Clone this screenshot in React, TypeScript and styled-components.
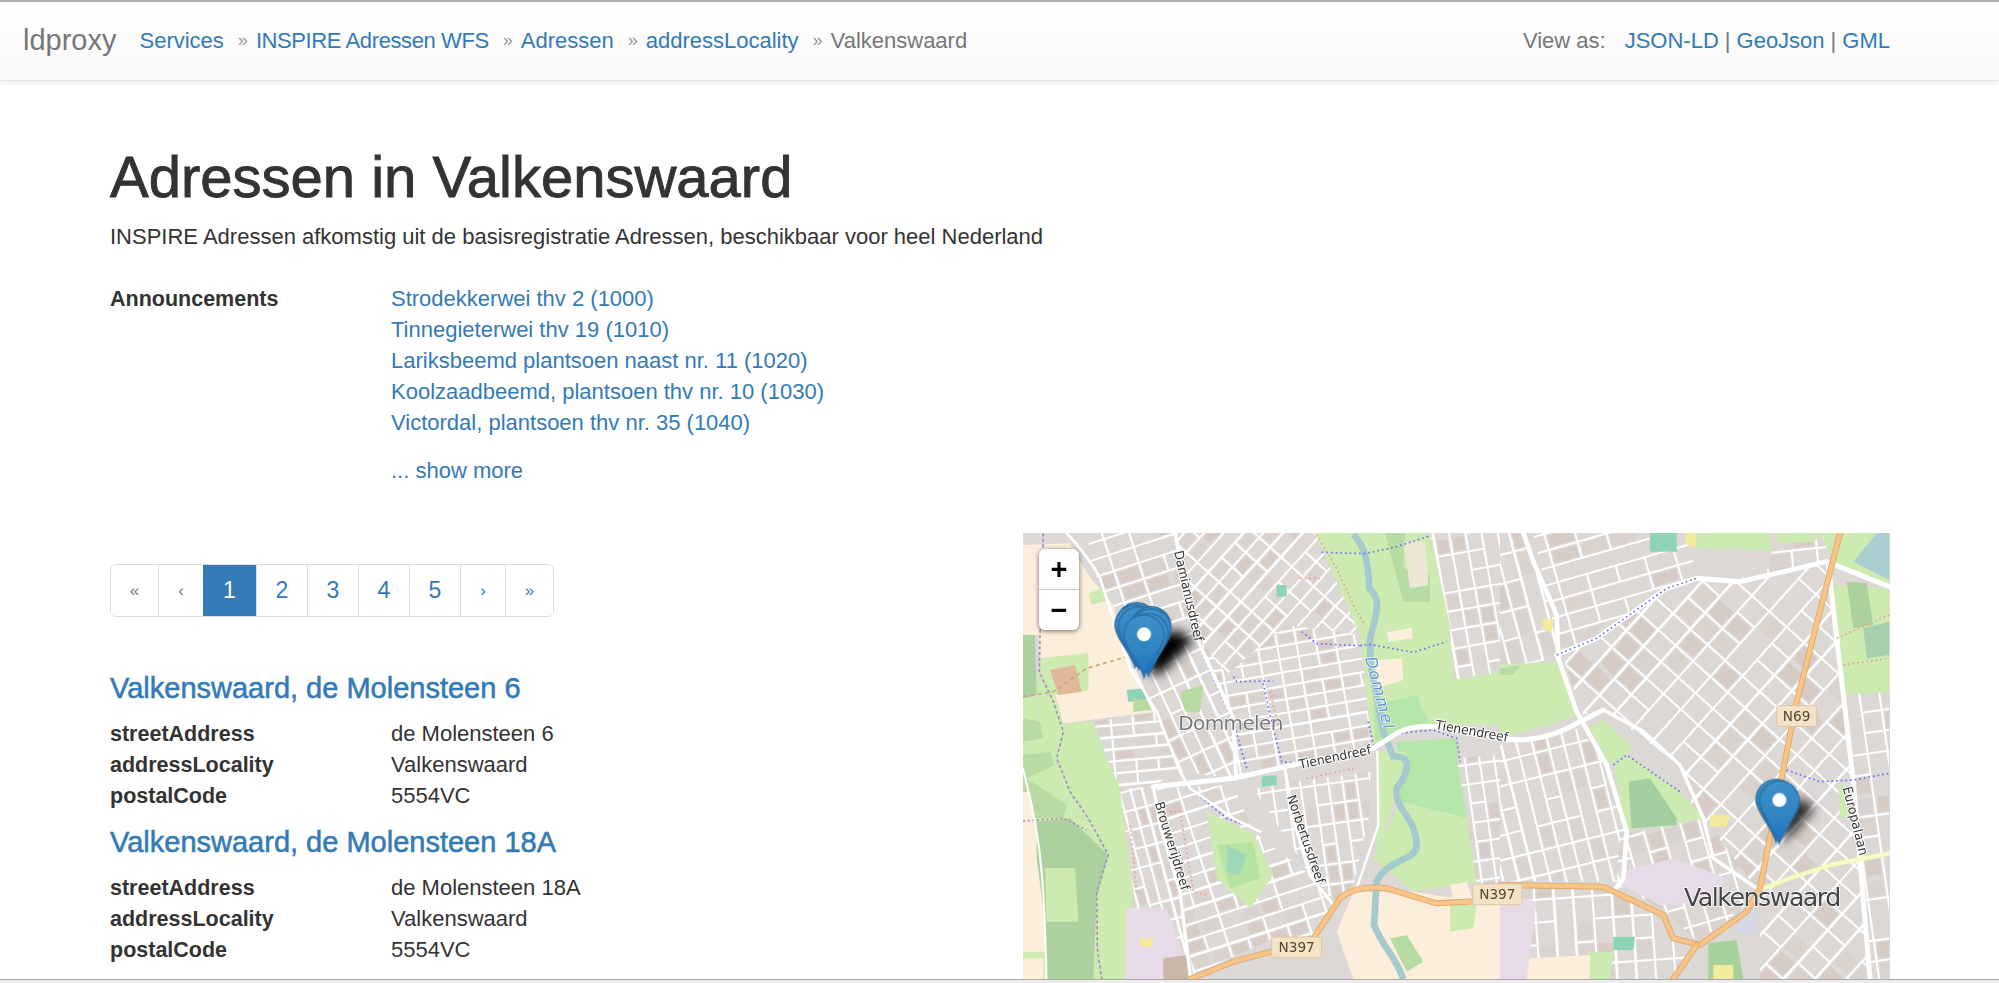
import React from "react";
import styled, { createGlobalStyle } from "styled-components";

const GlobalStyle = createGlobalStyle`
  html, body { margin: 0; padding: 0; height: 100%; overflow: hidden; background: #fff; }
  body { font-family: "Liberation Sans", Arial, sans-serif; font-size: 22px; color: #333; }
  * { box-sizing: border-box; }
  a { color: #337ab7; text-decoration: none; }
`;

const Page = styled.div`
  height: 983px;
  display: flex;
  flex-direction: column;
  overflow: hidden;
`;

const Navbar = styled.nav`
  height: 81px;
  flex: none;
  display: flex;
  align-items: center;
  padding: 0 109px 1px 23px;
  border-top: 2px solid #aeaeae;
  border-bottom: 1px solid #e6e6e6;
  background: linear-gradient(to bottom, #fff 0%, #f8f8f8 100%);
  box-shadow: 0 2px 5px rgba(0, 0, 0, 0.07);
  color: #777;
`;

const Brand = styled.div`
  font-size: 29px;
  margin-right: 23px;
`;

const Crumb = styled.a<{ $tight?: boolean }>`
  font-size: 22px;
  letter-spacing: ${(p) => (p.$tight ? "-0.4px" : "0")};
`;

const CrumbSep = styled.span`
  font-size: 18px;
  margin: 0 8px 0 14px;
  color: #999;
`;

const CurrentCrumb = styled.span`
  font-size: 22px;
  color: #777;
`;

const ViewAs = styled.div`
  margin-left: auto;
  font-size: 22px;
  display: flex;
  align-items: center;
`;

const ViewLabel = styled.span`
  margin-right: 19px;
`;

const Pipe = styled.span`
  margin: 0 6px;
`;

const Main = styled.main`
  flex: 1;
  min-height: 0;
  padding: 0 109px 0 110px;
  overflow: hidden;
`;

const Title = styled.h1`
  margin: 61px 0 0;
  font-size: 58px;
  line-height: 69px;
  font-weight: 400;
  -webkit-text-stroke: 0.9px #333;
  color: #333;
`;

const Subtitle = styled.p`
  margin: 10px 0 0;
  font-size: 22px;
  line-height: 31px;
  color: #333;
`;

const DefRow = styled.div`
  display: grid;
  grid-template-columns: 281px 1fr;
  align-items: baseline;
  font-size: 22px;
  line-height: 31px;
`;

const Announcements = styled(DefRow)`
  margin-top: 31px;
`;

const PropRow = styled(DefRow)`
  height: 31px;
`;

const Term = styled.div`
  font-weight: 700;
  font-size: 21.5px;
`;

const LinkList = styled.div`
  display: flex;
  flex-direction: column;
`;

const ShowMore = styled.a`
  display: block;
  margin-top: 17px;
`;

const Columns = styled.div`
  display: flex;
  justify-content: space-between;
  margin-top: 47px;
`;

const LeftColumn = styled.div`
  width: 700px;
  padding-top: 31px;
`;

const Pager = styled.ul`
  list-style: none;
  display: inline-flex;
  margin: 0;
  padding: 0;
  height: 53px;
  border: 1px solid #ddd;
  border-radius: 6px;
  overflow: hidden;
`;

const PageCell = styled.li<{ $w: number; $active?: boolean; $small?: boolean; $muted?: boolean }>`
  width: ${(p) => p.$w}px;
  display: flex;
  align-items: center;
  justify-content: center;
  font-size: ${(p) => (p.$small ? 17 : 23)}px;
  color: ${(p) => (p.$active ? "#fff" : p.$muted ? "#777" : "#337ab7")};
  background: ${(p) => (p.$active ? "#337ab7" : "#fff")};
  border-left: ${(p) => (p.$active ? "none" : "1px solid #ddd")};
  &:first-child {
    border-left: none;
  }
`;

const ItemTitle = styled.a`
  display: block;
  font-size: 29px;
  line-height: 40px;
  font-weight: 400;
  -webkit-text-stroke: 0.55px #337ab7;
`;

const FirstItem = styled.div`
  margin-top: 51px;
`;

const Item = styled.div`
  margin-top: 11px;
`;

const Props = styled.div`
  margin-top: 10px;
`;

const MapFrame = styled.div`
  position: relative;
  width: 867px;
  height: 447px;
  overflow: hidden;
  background: #dcd8d6;
  flex: none;
`;

const MapSvg = styled.svg`
  display: block;
  width: 867px;
  height: 447px;
`;

const ZoomBox = styled.div`
  position: absolute;
  left: 16px;
  top: 16px;
  width: 40px;
  height: 81px;
  background: #fff;
  border-radius: 6px;
  box-shadow: 0 1px 5px rgba(0, 0, 0, 0.55);
  display: flex;
  flex-direction: column;
`;

const ZoomBtn = styled.div`
  flex: 1;
  display: flex;
  align-items: center;
  justify-content: center;
  font: 700 29px/1 "Liberation Sans", sans-serif;
  color: #000;
  & + & {
    border-top: 1px solid #ccc;
  }
`;

const BottomEdge = styled.div`
  flex: none;
  height: 4px;
  background: #ececec;
  border-top: 1px solid #a9a9a9;
`;

// map data is in 3x coordinates of the map crop (viewBox 9 24 2601 1341)
const RIGHT = 1440;

type Zone = { pts: number[][]; angle: number; dx: number; dy: number };

const shift = (pts: number[][]) => pts.map(([x, y]) => [x + RIGHT, y]);

const zones: Zone[] = [
  { pts: [[200, 24], [470, 24], [535, 340], [340, 440], [280, 240], [220, 140]], angle: 72, dx: 50, dy: 78 },
  { pts: [[470, 24], [885, 24], [1020, 330], [800, 300], [620, 450], [535, 340]], angle: 42, dx: 44, dy: 60 },
  { pts: [[535, 340], [620, 450], [800, 300], [1020, 330], [1050, 620], [1060, 670], [840, 715], [645, 755], [640, 580]], angle: 80, dx: 40, dy: 58 },
  { pts: [[340, 440], [535, 340], [640, 580], [640, 760], [480, 740]], angle: -25, dx: 42, dy: 70 },
  { pts: [[220, 590], [410, 560], [480, 740], [400, 780], [300, 790], [270, 720]], angle: 85, dx: 36, dy: 66 },
  { pts: [[300, 790], [400, 785], [480, 1100], [510, 1362], [320, 1362], [340, 1100]], angle: -15, dx: 34, dy: 58 },
  { pts: [[700, 790], [1050, 740], [1050, 860], [1000, 1080], [940, 1130], [870, 1050]], angle: -8, dx: 42, dy: 60 },
  { pts: [[410, 790], [640, 780], [700, 920], [870, 1050], [950, 1130], [880, 1240], [760, 1240], [520, 1350], [480, 1100]], angle: 72, dx: 46, dy: 62 },
  { pts: [[1230, 24], [1440, 24], [1440, 440], [1300, 465], [1290, 300]], angle: -10, dx: 48, dy: 56 },
  { pts: [[1310, 700], [1440, 690], [1440, 1100], [1370, 1070], [1340, 880]], angle: -8, dx: 44, dy: 58 },
  { pts: shift([[0, 24], [70, 24], [170, 270], [175, 400], [0, 430]]), angle: -15, dx: 50, dy: 84 },
  { pts: shift([[100, 24], [580, 24], [580, 160], [290, 340], [180, 390]]), angle: 74, dx: 50, dy: 90 },
  { pts: shift([[580, 24], [980, 24], [980, 110], [720, 170], [590, 160]]), angle: 84, dx: 130, dy: 76 },
  { pts: shift([[190, 400], [500, 190], [590, 160], [720, 170], [980, 110], [1030, 510], [1060, 770], [1110, 1362], [780, 1362], [780, 1100], [620, 990], [540, 720], [310, 555], [250, 570]]), angle: 42, dx: 70, dy: 66 },
  { pts: shift([[0, 660], [240, 610], [320, 720], [380, 920], [370, 1070], [0, 1070]]), angle: -14, dx: 46, dy: 72 },
  { pts: shift([[0, 1090], [340, 1090], [500, 1170], [520, 1240], [590, 1270], [520, 1362], [0, 1362]]), angle: -4, dx: 58, dy: 68 },
  { pts: shift([[360, 930], [610, 880], [770, 1090], [720, 1160], [590, 1250], [500, 1160], [350, 1080]]), angle: -16, dx: 56, dy: 62 },
  { pts: shift([[1030, 510], [1168, 500], [1168, 1362], [1110, 1362]]), angle: -8, dx: 60, dy: 62 },
];

function rng(seed: number) {
  let s = seed;
  return () => {
    s = (s * 16807) % 2147483647;
    return (s - 1) / 2147483646;
  };
}

function zoneStreets(z: Zone, idx: number) {
  const r = rng(idx * 9973 + 131);
  const xs = z.pts.map((p) => p[0]);
  const ys = z.pts.map((p) => p[1]);
  const cx = (Math.min(...xs) + Math.max(...xs)) / 2;
  const cy = (Math.min(...ys) + Math.max(...ys)) / 2;
  const span = Math.max(Math.max(...xs) - Math.min(...xs), Math.max(...ys) - Math.min(...ys));
  const out: React.ReactNode[] = [];
  // tan building patches sit under the streets
  for (let u = -span; u <= span; u += z.dx) {
    for (let v = -span; v <= span; v += z.dy) {
      if (r() > 0.6) {
        out.push(
          <rect
            key={`b${u}-${v}`}
            x={u + 8}
            y={v + 8}
            width={z.dx - 16}
            height={z.dy - 16}
            fill={r() > 0.5 ? "#d6ccc5" : "#d9d2cd"}
            stroke="none"
          />
        );
      }
    }
  }
  for (let u = -span; u <= span; u += z.dx) {
    out.push(
      <line key={`u${u}`} x1={u} x2={u} y1={-span} y2={span} strokeWidth={r() > 0.8 ? 8 : 6} />
    );
  }
  for (let v = -span; v <= span; v += z.dy) {
    const a = Math.round(z.dx * (1 + Math.floor(r() * 3)));
    const b = Math.round(z.dx * (1 + Math.floor(r() * 2)));
    out.push(
      <line key={`v${v}`} x1={-span} x2={span} y1={v} y2={v} strokeWidth={6} strokeDasharray={r() > 0.4 ? `${a} ${b}` : undefined} />
    );
  }
  return (
    <g transform={`translate(${cx} ${cy}) rotate(${z.angle})`} stroke="#fff" fill="none">
      {out}
    </g>
  );
}

function Road({ d, w = 12, color = "#fff" }: { d: string; w?: number; color?: string }) {
  return <path d={d} fill="none" stroke={color} strokeWidth={w} strokeLinecap="round" strokeLinejoin="round" />;
}

function Highway({ d }: { d: string }) {
  return (
    <>
      <Road d={d} w={18} color="#dda666" />
      <Road d={d} w={13} color="#f9c488" />
    </>
  );
}

function Dotted({ d, color = "#6c6cf0", dash = "5 9" }: { d: string; color?: string; dash?: string }) {
  return <path d={d} fill="none" stroke={color} strokeWidth={5} strokeDasharray={dash} />;
}

function Shield({ x, y, w, label }: { x: number; y: number; w: number; label: string }) {
  return (
    <g>
      <rect x={x - w / 2} y={y - 31} width={w} height={62} rx={7} fill="#f3e2c6" stroke="#dcc7a6" strokeWidth={3} />
      <text x={x} y={y + 15} textAnchor="middle" fontFamily="'DejaVu Sans', sans-serif" fontSize={41} fill="#55482f">
        {label}
      </text>
    </g>
  );
}

function RoadLabel({ x, y, rot, len, size = 39, text }: { x: number; y: number; rot: number; len: number; size?: number; text: string }) {
  return (
    <text
      transform={`translate(${x} ${y}) rotate(${rot})`}
      fontFamily="'DejaVu Sans', sans-serif"
      fontSize={size}
      fill="#333"
      stroke="#fff"
      strokeWidth={6}
      paintOrder="stroke"
      textLength={len}
      lengthAdjust="spacingAndGlyphs"
    >
      {text}
    </text>
  );
}

function Pin({ x, top }: { x: number; top: number }) {
  return (
    <g transform={`translate(${x} ${top + 187})`}>
      <path
        d="M0 0C-12 -42 -60 -90 -60 -127A60 60 0 0 1 60 -127C60 -90 12 -42 0 0Z"
        fill="url(#pinFill)"
        stroke="#2a6ea5"
        strokeWidth={4}
      />
    </g>
  );
}

function MapArt() {
  return (
    <MapSvg viewBox="9 24 2601 1341" preserveAspectRatio="none">
      <defs>
        <linearGradient id="pinFill" x1="0" y1="0" x2="0" y2="1">
          <stop offset="0" stopColor="#3f90c8" />
          <stop offset="0.6" stopColor="#2f83c2" />
          <stop offset="1" stopColor="#1a72c6" />
        </linearGradient>
        <filter id="soft" x="0" y="0" width="100%" height="100%">
          <feGaussianBlur stdDeviation="2" />
        </filter>
        <filter id="shadow" x="-50%" y="-50%" width="200%" height="200%">
          <feGaussianBlur stdDeviation="16" />
        </filter>
        {zones.map((z, i) => (
          <clipPath id={`zone${i}`} key={i}>
            <polygon points={z.pts.map((p) => p.join(",")).join(" ")} />
          </clipPath>
        ))}
      </defs>

      <g filter="url(#soft)">
        <rect x="9" y="24" width="2601" height="1341" fill="#dcd8d6" />

        {/* left side farmland and meadows */}
        <polygon points="9,60 150,55 205,150 280,240 340,440 410,560 130,595 105,510 205,495 205,385 60,400 55,330 9,330" fill="#fbeedb" />
        <polygon points="205,205 250,190 265,225 215,240" fill="#cdebb0" />
        <polygon points="60,400 205,385 205,495 105,510 50,510" fill="#cdebb0" />
        <polygon points="90,435 165,420 185,500 115,510" fill="#e0b89a" />
        <polygon points="9,330 45,330 50,510 9,520" fill="#add19e" />
        <polygon points="9,520 105,510 130,595 220,590 270,720 300,790 340,1100 320,1362 9,1362" fill="#cdebb0" />
        <polygon points="9,580 60,590 70,640 9,650" fill="#b7dba0" />
        <polygon points="9,690 90,680 105,720 20,760 140,840 130,880 9,880" fill="#b7dba0" />
        <polygon points="9,800 30,800 70,1000 80,1280 9,1280" fill="#fbeedb" />
        <polygon points="9,1300 70,1300 70,1362 9,1362" fill="#fbeedb" />
        <polygon points="50,890 150,880 265,990 230,1120 220,1362 85,1362 75,1190 50,1000" fill="#add19e" />
        <polygon points="75,1030 165,1030 175,1190 80,1190" fill="#cdebb0" />
        <polygon points="320,495 375,490 385,525 325,530" fill="#8fd3b5" />
        <polygon points="340,520 400,530 405,555 340,560" fill="#b7dba0" />

        {/* centre-right greens, peach fields */}
        <polygon points="885,24 1230,24 1290,300 1300,465 1440,440 1440,600 1240,600 1130,625 1065,665 1050,600 1020,330" fill="#cdebb0" />
        <polygon points="1095,24 1155,24 1150,130 1230,150 1230,230 1150,230" fill="#b7dba0" />
        <polygon points="1150,50 1215,50 1225,180 1170,190" fill="#eee6d4" />
        <polygon points="1065,405 1145,400 1150,465 1070,490" fill="#fbeedb" />
        <polygon points="1100,322 1175,308 1178,340 1105,350" fill="#fbeedb" />
        <polygon points="1060,540 1190,510 1230,600 1130,625 1065,650" fill="#b4e6a8" />
        <polygon points="1130,650 1310,640 1340,880 1140,830" fill="#b4e6a8" />
        <polygon points="1140,830 1340,880 1370,1070 1180,1100 1060,1000" fill="#cdebb0" />
        <polygon points="1075,680 1160,680 1130,800 1070,1000" fill="#cdebb0" />
        <polygon points="1000,1100 1180,1100 1370,1130 1440,1130 1440,1362 1000,1362 950,1220" fill="#fbeedb" />
        <polygon points="1290,1080 1340,1070 1360,1130 1300,1130" fill="#fbeedb" />
        <polygon points="1290,1140 1370,1140 1360,1210 1290,1220" fill="#cdebb0" />
        <polygon points="1110,1240 1160,1230 1210,1310 1160,1340" fill="#b7dba0" />

        {zones.map((z, i) => (
          <g clipPath={`url(#zone${i})`} key={i}>
            <polygon points={z.pts.map((p) => p.join(",")).join(" ")} fill="#dcd8d6" />
            {zoneStreets(z, i + 1)}
          </g>
        ))}

        {/* pink and green patches on top of the built up areas */}
        <polygon points="320,1150 440,1150 480,1260 510,1362 315,1362" fill="#e8dbe8" />
        <polygon points="560,860 700,925 760,1050 690,1150 590,1060" fill="#cdebb0" />
        <polygon points="590,960 700,950 720,1060 630,1090" fill="#b7e3a0" />
        <polygon points="620,960 680,990 660,1050 620,1040" fill="#9fd8b8" />
        <polygon points="480,500 550,480 540,560 495,560" fill="#b7dba0" />
        <polygon points="770,180 800,180 800,215 770,215" fill="#8fd3b5" />
        <polygon points="725,755 770,750 770,780 725,785" fill="#8fd3b5" />
        <polygon points="360,1240 400,1240 395,1265 360,1265" fill="#f4ea9c" />
        <polygon points="430,1300 500,1290 505,1362 430,1362" fill="#c9b7a8" />

        <g transform={`translate(${RIGHT} 0)`}>
          <polygon points="0,420 170,410 235,570 60,625 0,640" fill="#cdebb0" />
          <polygon points="0,430 60,420 40,450 0,450" fill="#b7dba0" />
          <polygon points="340,720 385,690 540,800 610,880 380,915" fill="#cdebb0" />
          <polygon points="385,770 450,760 530,880 530,900 395,910" fill="#a3cfa0" />
          <polygon points="450,24 530,24 530,80 450,80" fill="#8fd3b5" />
          <polygon points="555,24 820,24 810,130 720,160 590,150" fill="#dcd8d6" />
          <polygon points="590,24 810,24 815,75 590,70" fill="#cdebb0" />
          <polygon points="555,24 590,24 585,70 560,60" fill="#f4ea9c" />
          <polygon points="830,24 960,24 945,50 835,55" fill="#cdebb0" />
          <polygon points="960,24 1168,24 1168,190 1000,110" fill="#cdebb0" />
          <polygon points="1060,110 1130,24 1168,24 1168,165" fill="#aacdd0" />
          <polygon points="1000,180 1168,190 1168,500 1030,510" fill="#cdebb0" />
          <polygon points="1040,170 1100,175 1120,300 1060,310" fill="#add19e" />
          <polygon points="1090,310 1168,290 1168,390 1100,400" fill="#a8d0b0" />
          <polygon points="80,1300 270,1290 270,1362 80,1362" fill="#fbeedb" />
          <polygon points="270,1280 340,1280 330,1362 270,1362" fill="#cdebb0" />
          <polygon points="340,1235 405,1235 400,1275 340,1275" fill="#8fd3b5" />
          <polygon points="625,1255 710,1245 730,1362 625,1362" fill="#a5d19a" />
          <polygon points="640,1320 700,1320 700,1362 640,1362" fill="#f4ea9c" />
          <polygon points="0,1100 110,1130 80,1362 0,1362" fill="#e8dbe8" />
          <polygon points="365,1040 520,1000 680,1060 640,1130 480,1140 365,1080" fill="#e8dbe8" />
          <polygon points="630,870 690,870 680,905 630,905" fill="#f4ea9c" />
          <polygon points="700,1160 775,1150 760,1230 700,1215" fill="#d5d7e4" />
          <polygon points="770,820 800,820 790,880 770,880" fill="#f0d8b8" />
          <polygon points="1015,780 1040,780 1045,880 1020,880" fill="#cdebb0" />
          <polygon points="125,280 160,285 155,320 130,315" fill="#f4ea9c" />
          <polygon points="270,610 310,585 400,670 330,720" fill="#cdebb0" />
        </g>

        {/* water */}
        <path
          d="M1000 28C1030 60 1045 100 1048 190C1090 225 1065 280 1050 340L1052 420L1090 620L1120 695C1170 690 1175 730 1130 790C1120 850 1190 880 1190 960C1190 1010 1100 1000 1070 1070L1062 1200C1090 1270 1125 1290 1150 1362"
          fill="none"
          stroke="#a4cace"
          strokeWidth={20}
        />

        {/* minor paths */}
        <Dotted d="M905 82L1035 86L1130 65L1225 34" />
        <Dotted d="M1020 362L1048 358L1180 382L1280 350" />
        <Dotted d="M640 455L650 470L760 468M730 475L750 570L785 710L830 715M640 590L680 730" />
        <Dotted d="M845 320L890 356L1020 362" />
        <Dotted d="M1045 590L1060 660M1130 625L1240 615L1310 640L1320 710" />
        <Dotted d="M510 790L620 880L660 895" />
        <Dotted d="M530 350L640 590" />
        <Dotted d="M890 30L950 130L1000 240L1035 300" color="#e8a090" />
        <Dotted d="M840 160L900 160M750 500L780 620M860 760L1000 730" color="#e8a090" />
        <Dotted d="M450 860L480 860L520 1100L560 1110M330 900L350 1100" color="#e8a090" />
        <Dotted d="M70 24L60 330L58 440L100 530L130 620L110 700L150 800L205 880L265 990L230 1100L232 1270L245 1362" color="#a88cc4" dash="10 7" />
        <Dotted d="M9 888L130 880L200 915" color="#b485b8" dash="6 8" />
        <Dotted d="M10 515L100 500L200 430L320 395" color="#c8a878" dash="12 10" />

        {/* streets */}
        <Road d="M140 24C190 80 225 130 240 160L330 430L410 560L480 740L510 790L640 880L720 920" w={8} />
        <Road d="M9 730C50 900 75 1000 78 1362" w={6} />
        <Road d="M465 24L530 340L600 490L640 580L648 760" w={12} />
        <Road d="M400 785L640 760L840 715L1060 670L1130 625C1160 605 1200 600 1260 605L1440 640" w={15} />
        <Road d="M795 735L820 880L870 1050L940 1140" w={10} />
        <Road d="M400 785L420 900L480 1100L512 1362" w={10} />
        <Road d="M1072 680L1075 900L1010 1090" w={7} />
        <Road d="M1440 640C1500 650 1580 650 1680 590L1750 555" w={15} />

        <g transform={`translate(${RIGHT} 0)`}>
          <Road d="M70 24L100 110L170 270L175 400L230 560L320 720L380 920L370 1060L340 1100" w={14} />
          <Road d="M170 390L290 340L500 190L590 160L720 170L980 110L1168 185" w={15} />
          <Road d="M310 555L430 620L540 720L610 880L640 1000L770 1090" w={11} />
          <Road d="M985 120L1030 510L1060 770L1110 1362" w={15} />
          <Road d="M790 1090L870 1060L990 1020L1168 985" w={13} color="#f7fabf" />
          <Dotted d="M340 720L380 690L540 800M860 735L960 770L1060 765L1168 745" />
          <Dotted d="M170 390L290 340L500 190L590 160" />
          <Dotted d="M1010 340L1100 300L1168 270M1030 420L1168 400" color="#e8a090" />
          <Highway d="M0 1080L310 1085L490 1170L520 1240L600 1260L740 1160L780 1090L890 530L1020 24" />
          <Highway d="M590 1260L520 1362" />
        </g>
        <Highway d="M510 1362L640 1310L755 1280L880 1240L960 1120C1000 1085 1060 1085 1100 1090L1250 1135L1440 1125" />

        <text x={475} y={616} fontFamily="'DejaVu Sans', sans-serif" fontSize={60} fill="#777" stroke="#fff" strokeWidth={4} paintOrder="stroke" textLength={315}>
          Dommelen
        </text>
        <text transform="translate(1035 400) rotate(75)" fontFamily="'DejaVu Sans', sans-serif" fontStyle="italic" fontSize={48} fill="#5f92c8" stroke="#fff" strokeWidth={4} paintOrder="stroke" textLength={222}>
          Dommel
        </text>
        <RoadLabel x={462} y={80} rot={77} len={278} text="Damianusdreef" />
        <RoadLabel x={840} y={732} rot={-12} len={220} text="Tienendreef" />
        <RoadLabel x={1245} y={612} rot={10} len={220} text="Tienendreef" />
        <RoadLabel x={404} y={835} rot={73} len={275} text="Brouwerijdreef" />
        <RoadLabel x={800} y={815} rot={71} len={278} text="Norbertusdreef" />
        <Shield x={830} y={1267} w={150} label="N397" />
        <Shield x={1432} y={1108} w={148} label="N397" />
        <g transform={`translate(${RIGHT} 0)`}>
          <Shield x={890} y={573} w={120} label="N69" />
          <RoadLabel x={1028} y={788} rot={76} len={212} text="Europalaan" />
          <text x={552} y={1143} fontFamily="'DejaVu Sans', sans-serif" fontSize={76} fill="#444" stroke="#fff" strokeWidth={4} paintOrder="stroke" textLength={472}>
            Valkenswaard
          </text>
        </g>

        {/* marker shadows */}
        <g filter="url(#shadow)" fill="#000">
          <polygon points="385,450 430,440 520,345 470,315 400,340" />
          <polygon points={`${838 + RIGHT},950 ${870 + RIGHT},935 ${945 + RIGHT},850 ${900 + RIGHT},820 ${860 + RIGHT},850`} opacity={0.8} />
        </g>

        {/* marker pins */}
        {[[350, 233], [345, 240], [355, 245], [393, 245], [393, 252], [385, 265], [372, 270]].map(([x, top]) => (
          <Pin key={`${x}-${top}`} x={x} top={top} />
        ))}
        <circle cx={372} cy={328} r={21} fill="#fff" />
        <Pin x={828 + RIGHT} top={763} />
        <Pin x={838 + RIGHT} top={768} />
        <circle cx={838 + RIGHT} cy={825} r={21} fill="#fff" />
      </g>
    </MapSvg>
  );
}

const announcements = [
  "Strodekkerwei thv 2 (1000)",
  "Tinnegieterwei thv 19 (1010)",
  "Lariksbeemd plantsoen naast nr. 11 (1020)",
  "Koolzaadbeemd, plantsoen thv nr. 10 (1030)",
  "Victordal, plantsoen thv nr. 35 (1040)",
];

const crumbs = ["Services", "INSPIRE Adressen WFS", "Adressen", "addressLocality"];

const pages = [
  { label: "«", w: 47, small: true, muted: true },
  { label: "‹", w: 45, small: true, muted: true },
  { label: "1", w: 53, active: true },
  { label: "2", w: 51 },
  { label: "3", w: 51 },
  { label: "4", w: 51 },
  { label: "5", w: 51 },
  { label: "›", w: 45, small: true },
  { label: "»", w: 48, small: true },
];

const items = [
  { title: "Valkenswaard, de Molensteen 6", street: "de Molensteen 6" },
  { title: "Valkenswaard, de Molensteen 18A", street: "de Molensteen 18A" },
];

function AddressProps({ street }: { street: string }) {
  return (
    <Props>
      <PropRow>
        <Term>streetAddress</Term>
        <div>{street}</div>
      </PropRow>
      <PropRow>
        <Term>addressLocality</Term>
        <div>Valkenswaard</div>
      </PropRow>
      <PropRow>
        <Term>postalCode</Term>
        <div>5554VC</div>
      </PropRow>
    </Props>
  );
}

export default function App() {
  return (
    <>
      <GlobalStyle />
      <Page>
        <Navbar>
          <Brand>ldproxy</Brand>
          {crumbs.map((c) => (
            <React.Fragment key={c}>
              <Crumb href="#" $tight={c.startsWith("INSPIRE")}>
                {c}
              </Crumb>
              <CrumbSep>»</CrumbSep>
            </React.Fragment>
          ))}
          <CurrentCrumb>Valkenswaard</CurrentCrumb>
          <ViewAs>
            <ViewLabel>View as:</ViewLabel>
            <a href="#">JSON-LD</a>
            <Pipe>|</Pipe>
            <a href="#">GeoJson</a>
            <Pipe>|</Pipe>
            <a href="#">GML</a>
          </ViewAs>
        </Navbar>
        <Main>
          <Title>Adressen in Valkenswaard</Title>
          <Subtitle>INSPIRE Adressen afkomstig uit de basisregistratie Adressen, beschikbaar voor heel Nederland</Subtitle>
          <Announcements>
            <Term>Announcements</Term>
            <LinkList>
              {announcements.map((a) => (
                <a href="#" key={a}>
                  {a}
                </a>
              ))}
              <ShowMore href="#">... show more</ShowMore>
            </LinkList>
          </Announcements>
          <Columns>
            <LeftColumn>
              <Pager>
                {pages.map((p) => (
                  <PageCell key={p.label} $w={p.w} $active={p.active} $small={p.small} $muted={p.muted}>
                    {p.label}
                  </PageCell>
                ))}
              </Pager>
              {items.map((it, i) => {
                const Wrap = i === 0 ? FirstItem : Item;
                return (
                  <Wrap key={it.title}>
                    <ItemTitle href="#">{it.title}</ItemTitle>
                    <AddressProps street={it.street} />
                  </Wrap>
                );
              })}
            </LeftColumn>
            <MapFrame>
              <MapArt />
              <ZoomBox>
                <ZoomBtn>+</ZoomBtn>
                <ZoomBtn>−</ZoomBtn>
              </ZoomBox>
            </MapFrame>
          </Columns>
        </Main>
        <BottomEdge />
      </Page>
    </>
  );
}
